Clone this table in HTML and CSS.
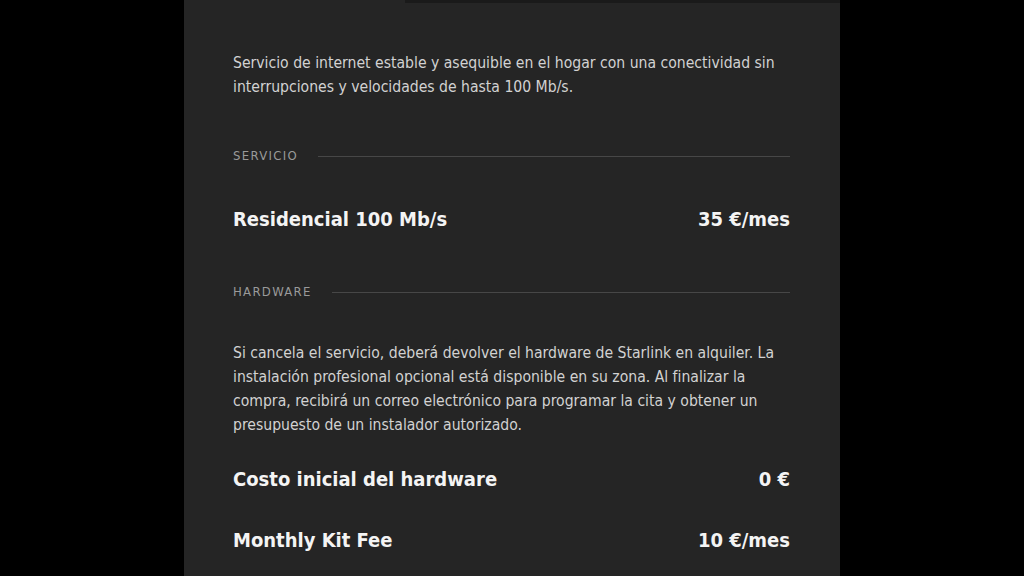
FILE: index.html
```html
<!DOCTYPE html>
<html lang="es">
<head>
<meta charset="utf-8">
<title>Starlink</title>
<link rel="stylesheet" href="styles.css">
</head>
<body>
<main class="panel">
  <div class="tabline"></div>
  <p class="intro">Servicio de internet estable y asequible en el hogar con una conectividad sin interrupciones y velocidades de hasta 100 Mb/s.</p>

  <div class="section-label label-servicio"><span>SERVICIO</span><i class="rule"></i></div>
  <div class="row row-first"><span>Residencial 100 Mb/s</span><span>35 €/mes</span></div>

  <div class="section-label label-hardware"><span>HARDWARE</span><i class="rule"></i></div>
  <p class="note">Si cancela el servicio, deberá devolver el hardware de Starlink en alquiler. La instalación profesional opcional está disponible en su zona. Al finalizar la compra, recibirá un correo electrónico para programar la cita y obtener un presupuesto de un instalador autorizado.</p>
  <div class="row row-cost"><span>Costo inicial del hardware</span><span>0 €</span></div>
  <div class="row row-kit"><span>Monthly Kit Fee</span><span>10 €/mes</span></div>
</main>
</body>
</html>
```
FILE: styles.css
```css
html, body {
  margin: 0;
  padding: 0;
  background: #000;
  height: 100%;
  overflow: hidden;
}
body {
  font-family: "DejaVu Sans Condensed", "DejaVu Sans", sans-serif;
}
.panel {
  position: relative;
  width: 656px;
  height: 576px;
  margin: 0 auto;
  background: #252525;
  box-sizing: border-box;
  padding: 51px 50px 0 49px;
}
.tabline {
  position: absolute;
  top: 0;
  left: 221px;
  right: 0;
  height: 3px;
  background: #1a1a1a;
}
.intro, .note {
  margin: 0;
  font-size: 15.6px;
  line-height: 24px;
  color: #d2d2d2;
}
.section-label {
  display: flex;
  align-items: center;
  gap: 20px;
  font-size: 13px;
  line-height: 16px;
  letter-spacing: 1.3px;
  color: #9a9a9a;
}
.section-label .rule {
  flex: 1;
  height: 1px;
  background: #474747;
}
.label-servicio { margin-top: 49px; }
.label-hardware { margin-top: 51px; }
.note { margin-top: 41px; }
.row {
  display: flex;
  justify-content: space-between;
  font-size: 20px;
  line-height: 28px;
  font-weight: bold;
  color: #f4f4f4;
}
.row-first { margin-top: 41px; }
.row-cost { margin-top: 28px; }
.row-kit { margin-top: 33px; }
```
